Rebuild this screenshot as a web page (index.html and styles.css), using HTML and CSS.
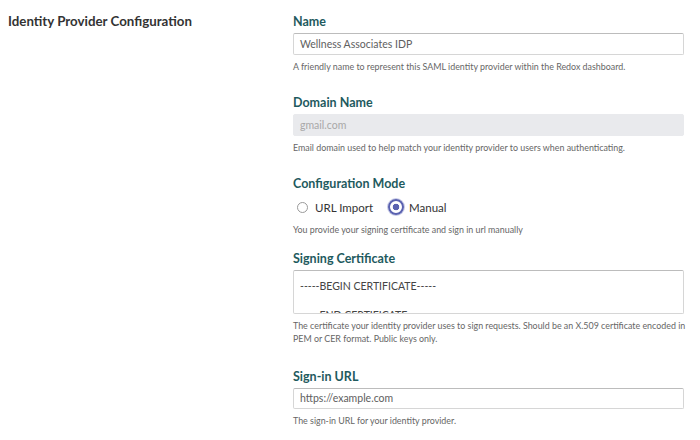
FILE: index.html
```html
<!DOCTYPE html>
<html>
<head>
<meta charset="utf-8">
<link rel="stylesheet" href="styles.css">
</head>
<body>
<div class="page">
  <div class="side">
    <h2 class="side-title">Identity Provider Configuration</h2>
  </div>
  <div class="form">
    <div class="field f-name">
      <div class="label">Name</div>
      <div class="input">Wellness Associates IDP</div>
      <div class="help">A friendly name to represent this SAML identity provider within the Redox dashboard.</div>
    </div>
    <div class="field f-domain">
      <div class="label">Domain Name</div>
      <div class="input disabled">gmail.com</div>
      <div class="help">Email domain used to help match your identity provider to users when authenticating.</div>
    </div>
    <div class="field f-mode">
      <div class="label">Configuration Mode</div>
      <div class="radios">
        <label class="radio"><span class="dot"></span>URL Import</label>
        <label class="radio checked"><span class="dot"></span>Manual</label>
      </div>
      <div class="help">You provide your signing certificate and sign in url manually</div>
    </div>
    <div class="field f-cert">
      <div class="label">Signing Certificate</div>
      <div class="textarea">
        <div class="ta-line">-----BEGIN CERTIFICATE-----</div>
        <div class="ta-line end">-----END CERTIFICATE-----</div>
      </div>
      <div class="help wide">The certificate your identity provider uses to sign requests. Should be an X.509 certificate encoded in PEM or CER format. Public keys only.</div>
    </div>
    <div class="field f-url">
      <div class="label">Sign-in URL</div>
      <div class="input">https://example.com</div>
      <div class="help">The sign-in URL for your identity provider.</div>
    </div>
  </div>
</div>
</body>
</html>
```
FILE: styles.css
```css
* { box-sizing: border-box; }
html, body { margin: 0; padding: 0; background: #fff; }
body { font-family: Lato, "Open Sans", sans-serif; color: #333; }
.page { display: flex; width: 700px; height: 440px; overflow: hidden; }
.side { width: 293px; padding-left: 8px; padding-top: 13px; }
.side-title { margin: 0; font-size: 13.3px; line-height: 17px; font-weight: 700; color: #333; }
.form { width: 391px; padding-top: 14px; }
.field { display: flex; flex-direction: column; }
.label { font-size: 12.5px; line-height: 16px; font-weight: 700; color: #1e5a5e; margin-bottom: 3px; }
.input { height: 22px; border: 1px solid #d6d6d6; border-top-color: #bcbcbc; border-radius: 2px; padding: 0 6px; font-size: 10.5px; line-height: 20px; color: #606060; }
.input.disabled { background: #e9eaed; border-color: #e9eaed; color: #a8a8a8; }
.help { margin-top: 5px; font-size: 8.9px; line-height: 13px; color: #666; }
.help.wide { margin-right: -10px; }
.f-domain { margin-top: 22px; }
.f-mode { margin-top: 22px; }
.f-cert { margin-top: 15px; }
.f-url { margin-top: 24px; }
.f-url .input { height: 21px; line-height: 19px; }
.radios { display: flex; align-items: center; height: 18px; margin-top: 3px; }
.f-mode .help { margin-top: 7px; }
.radio { display: flex; align-items: center; font-size: 11.5px; color: #333; margin-right: 15px; }
.radio .dot { width: 11px; height: 11px; border: 1px solid #9a9a9a; border-radius: 50%; margin: 0 7px 0 4px; }
.radio.checked .dot { width: 16px; height: 16px; margin: 0 5px 0 0; border: 2px solid #5a62b0; background: radial-gradient(circle, #5a62b0 0 3px, #fff 3.6px); box-shadow: 0 0 0 1px #c9cce8; }
.textarea { height: 44px; border: 1px solid #d6d6d6; border-top-color: #bcbcbc; border-radius: 2px; padding: 9px 6px 0; font-size: 10.5px; line-height: 13px; color: #444; overflow: hidden; }
.ta-line.end { margin-top: 16px; }
```
